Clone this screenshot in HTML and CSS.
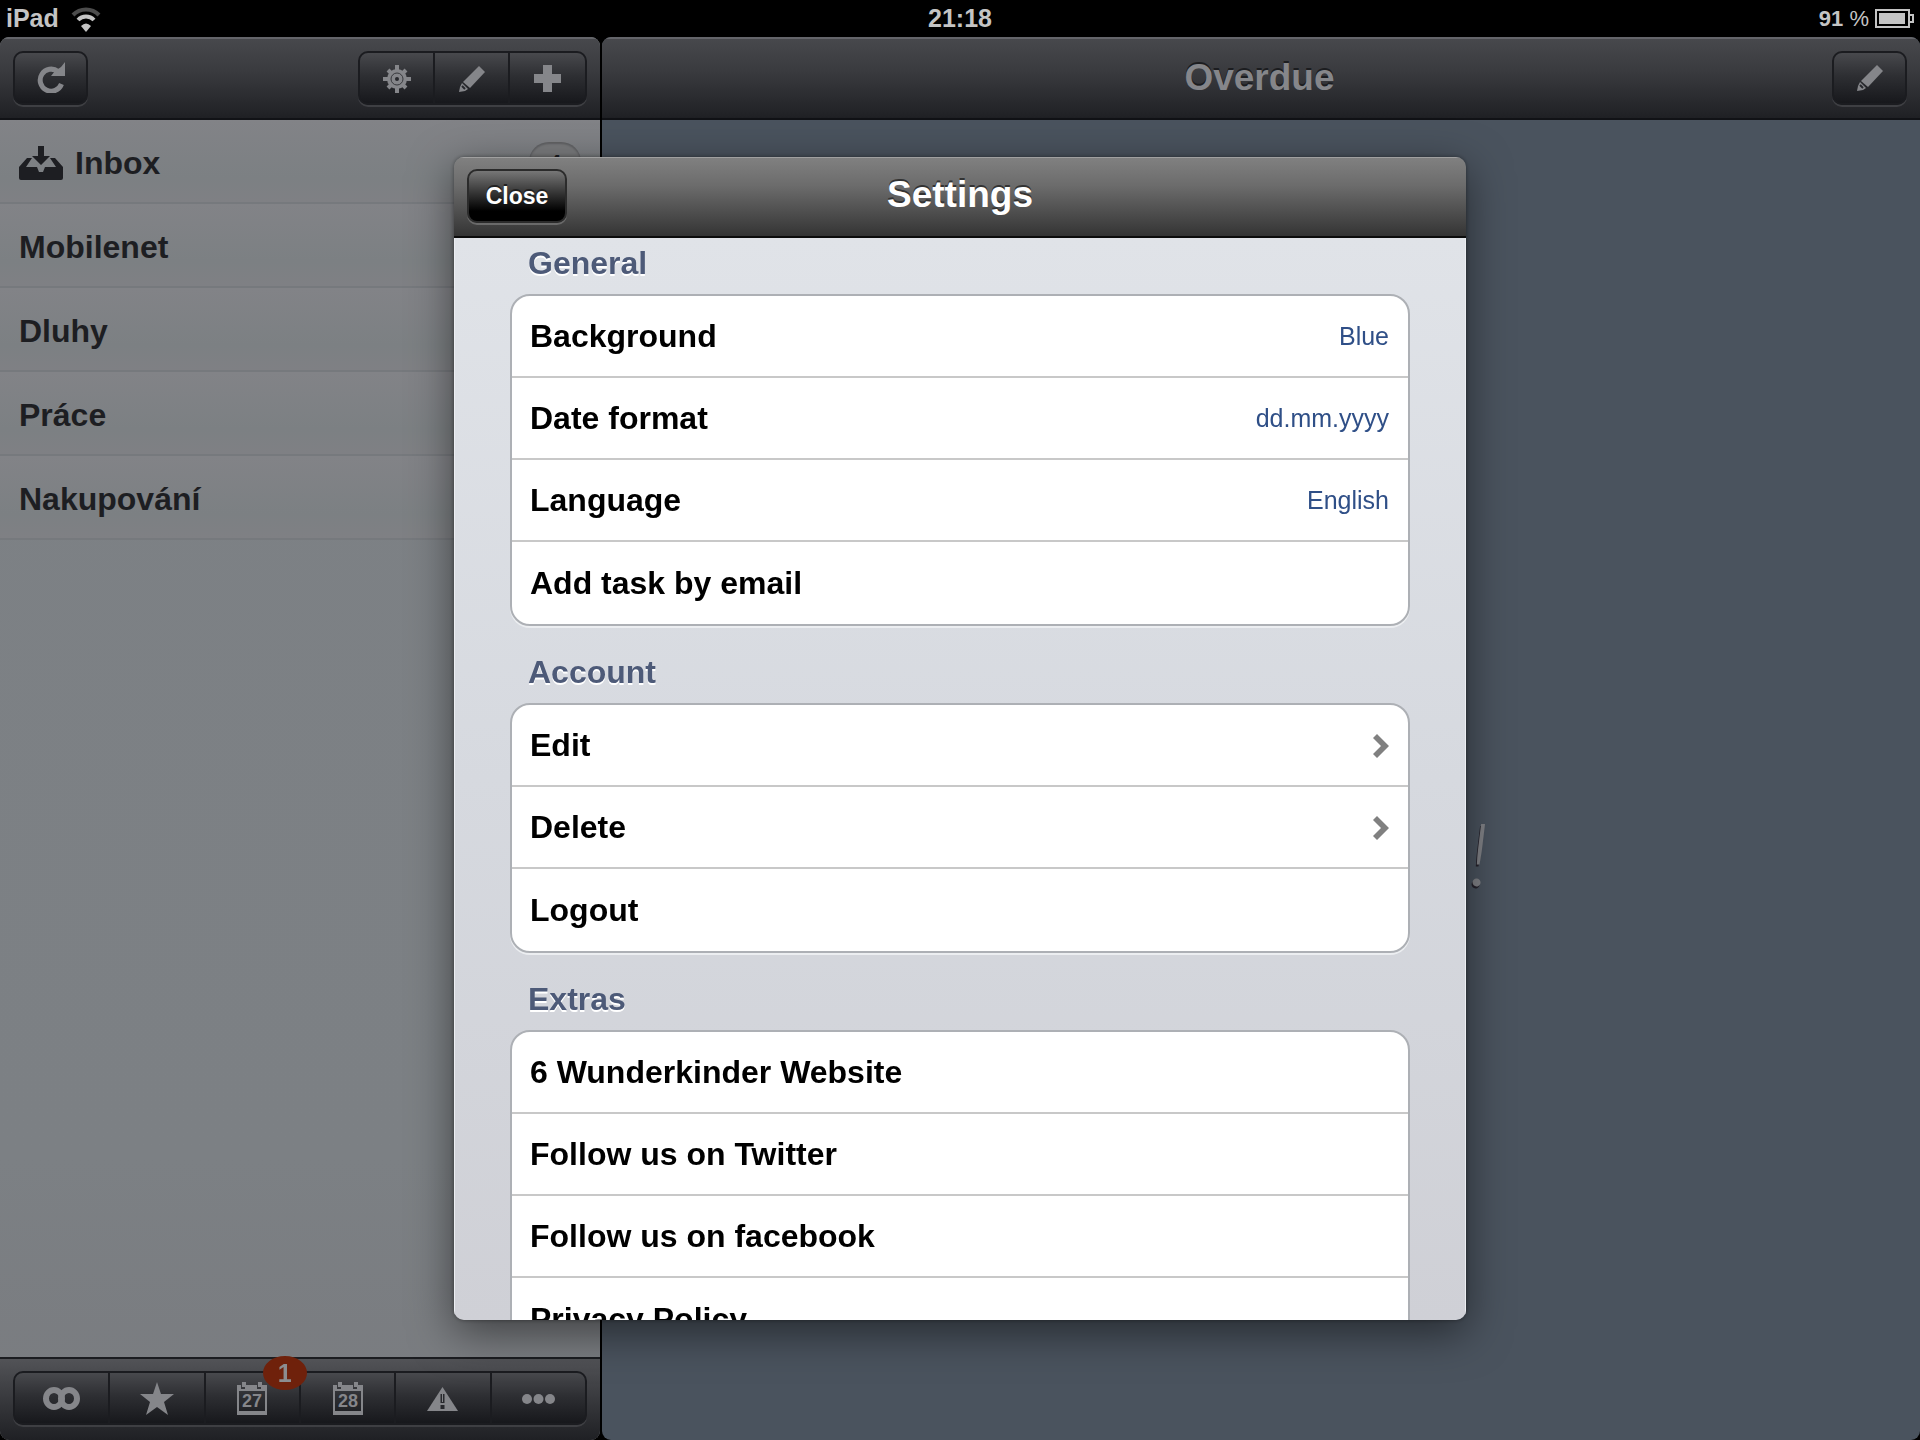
FILE: index.html
```html
<!DOCTYPE html>
<html lang="en">
<head>
  <meta charset="UTF-8" />
  <meta name="viewport" content="width=device-width, initial-scale=1.0"/>
  <title>Settings</title>
  <link rel="stylesheet" href="styles.css">
</head>
<body>
  <svg class="defs" aria-hidden="true">
    <symbol id="icon-pencil" viewBox="0 0 26 26">
      <path d="M20 0l6 6-15 16-7-6z"/>
      <path d="M3 17l6 6-3 2-6 1 1-5z"/>
      <path class="cut" d="M3 20l3 3"/>
    </symbol>
    <symbol id="icon-chevron" viewBox="0 0 16 24">
      <path d="M4 0l12 12L4 24l-4-4 8-8-8-8z"/>
    </symbol>
    <symbol id="icon-calendar" viewBox="0 0 30 33">
      <path fill-rule="evenodd" d="M0 3h4v4h4V3h12v4h4V3h6v30H0zM2 9v20h26V9z"/>
      <path d="M5 0h4v5H5zM21 0h4v5h-4z"/>
    </symbol>
  </svg>

  <div class="app">
    <div class="status-bar">
      <div class="status-left">
        <span>iPad</span>
        <svg width="30" height="26" viewBox="0 0 30 26">
          <path class="wifi-off" d="M2 9a18 18 0 0 1 26 0"/>
          <path class="wifi-on" d="M7 14a11 11 0 0 1 16 0"/>
          <path class="wifi-dot" d="M10 20q5-5 10 0l-5 6z"/>
        </svg>
      </div>
      <div class="status-time">21:18</div>
      <div class="status-right">
        <span class="percent"><b>91</b> %</span>
        <svg width="39" height="20" viewBox="0 0 39 20">
          <rect class="battery-case" x="1" y="1" width="33" height="17"/>
          <path class="battery-case" d="M34 6h4v7h-4"/>
          <rect class="battery-level" x="4" y="4" width="26" height="11"/>
        </svg>
      </div>
    </div>

    <div class="panes">
      <div class="sidebar">
        <div class="toolbar">
          <button class="bar-btn" aria-label="Refresh">
            <svg width="28" height="31" viewBox="0 0 28 31">
              <path class="stroke" d="M21 9.500A11 11 0 1 0 24.500 22"/>
              <path d="M28 0v14H14l4-5 6-4z"/>
            </svg>
          </button>
          <div class="segmented">
            <button aria-label="Settings">
              <svg width="28" height="28" viewBox="-14 -14 28 28">
                <circle r="10"/>
                <path class="teeth" d="M0-14V14M-14 0H14M-9-9L9 9M9-9L-9 9"/>
                <circle class="ring" r="6"/>
                <circle class="hole" r="2"/>
              </svg>
            </button>
            <button aria-label="Edit lists">
              <svg width="26" height="26"><use href="#icon-pencil"/></svg>
            </button>
            <button aria-label="Add list">
              <svg width="27" height="27" viewBox="0 0 27 27">
                <path d="M9 0h9v9h9v9h-9v9H9v-9H0V9h9z"/>
              </svg>
            </button>
          </div>
        </div>

        <ul class="lists">
          <li>
            <a href="#inbox">
              <svg width="44" height="34" viewBox="0 0 44 34">
                <path d="M0 21l8-9h5l-6 9h11l2 5h4l2-5h11l-6-9h5l8 9v11q0 2-2 2H2q-2 0-2-2z"/>
                <path d="M19 0h6v10h6l-9 9-9-9h6z"/>
              </svg>
              Inbox
              <span class="count">4</span>
            </a>
          </li>
          <li><a href="#mobilenet">Mobilenet</a></li>
          <li><a href="#dluhy">Dluhy</a></li>
          <li><a href="#prace">Práce</a></li>
          <li><a href="#nakupovani">Nakupování</a></li>
        </ul>

        <div class="toolbar bottom">
          <div class="segmented wide">
            <button aria-label="All">
              <svg width="37" height="23" viewBox="0 0 37 23">
                <ellipse class="loop" cx="11" cy="11.500" rx="8" ry="8.500"/>
                <ellipse class="loop" cx="26" cy="11.500" rx="8" ry="8.500"/>
              </svg>
            </button>
            <button aria-label="Starred">
              <svg width="34" height="33" viewBox="0 0 34 33">
                <path d="M17 0l4 12h13l-10 8 4 13-11-8-11 8 4-13L0 12h13z"/>
              </svg>
            </button>
            <button aria-label="Today">
              <svg width="30" height="33" viewBox="0 0 30 33">
                <use href="#icon-calendar"/>
                <text x="15" y="25">27</text>
              </svg>
              <span class="badge">1</span>
            </button>
            <button aria-label="Tomorrow">
              <svg width="30" height="33" viewBox="0 0 30 33">
                <use href="#icon-calendar"/>
                <text x="15" y="25">28</text>
              </svg>
            </button>
            <button aria-label="Overdue">
              <svg width="31" height="24" viewBox="0 0 31 24">
                <path d="M15.500 0L31 24H0z"/>
                <path class="mark" d="M15.500 7v9M15.500 18v4"/>
                <path d="M15 7h1v8h-1z"/>
              </svg>
            </button>
            <button aria-label="More">
              <svg width="33" height="10" viewBox="0 0 33 10">
                <circle cx="5" cy="5" r="5"/>
                <circle cx="16.500" cy="5" r="5"/>
                <circle cx="28" cy="5" r="5"/>
              </svg>
            </button>
          </div>
        </div>
      </div>

      <div class="detail">
        <div class="toolbar">
          <h1>Overdue</h1>
          <button class="bar-btn" aria-label="Edit tasks">
            <svg width="26" height="26"><use href="#icon-pencil"/></svg>
          </button>
        </div>
        <div class="empty-note">!</div>
      </div>
    </div>
  </div>

  <div class="overlay">
    <div class="modal" role="dialog" aria-labelledby="modal-title">
      <div class="modal-header">
        <button class="close-btn">Close</button>
        <h2 id="modal-title">Settings</h2>
      </div>
      <div class="modal-body">
        <h3>General</h3>
        <div class="group">
          <button class="item">Background <span class="value">Blue</span></button>
          <button class="item">Date format <span class="value">dd.mm.yyyy</span></button>
          <button class="item">Language <span class="value">English</span></button>
          <button class="item">Add task by email</button>
        </div>

        <h3>Account</h3>
        <div class="group">
          <button class="item">Edit <svg width="16" height="24"><use href="#icon-chevron"/></svg></button>
          <button class="item">Delete <svg width="16" height="24"><use href="#icon-chevron"/></svg></button>
          <button class="item">Logout</button>
        </div>

        <h3>Extras</h3>
        <div class="group">
          <a class="item" href="#website">6 Wunderkinder Website</a>
          <a class="item" href="#twitter">Follow us on Twitter</a>
          <a class="item" href="#facebook">Follow us on facebook</a>
          <a class="item" href="#privacy">Privacy Policy</a>
        </div>
      </div>
    </div>
  </div>
</body>
</html>
```
FILE: styles.css
```css
* {
  box-sizing: border-box;
}

body {
  margin: 0;
  font-family: "Liberation Sans", Arial, sans-serif;
  font-size: 32px;
  background-color: #000;
  overflow: hidden;
}

h1, h2, h3, ul {
  margin: 0;
  padding: 0;
}

button {
  font-family: inherit;
  cursor: pointer;
}

a {
  color: inherit;
  text-decoration: none;
}

svg {
  display: block;
  flex: none;
}

.defs {
  position: absolute;
  width: 0;
  height: 0;
}

.app {
  display: flex;
  flex-direction: column;
  height: 100vh;
}

/* status bar */
.status-bar {
  display: grid;
  grid-template-columns: 1fr auto 1fr;
  align-items: center;
  height: 37px;
  padding: 0 6px;
  color: #c4c4c4;
  font-size: 25px;
  font-weight: bold;
}

.status-left,
.status-right {
  display: flex;
  align-items: center;
  gap: 12px;
}

.status-right {
  justify-content: flex-end;
  gap: 6px;
}

.percent {
  font-size: 22px;
  font-weight: normal;
}

.wifi-on,
.wifi-off {
  fill: none;
  stroke: #c4c4c4;
  stroke-width: 4;
}

.wifi-off {
  stroke: #4c4c4c;
}

.wifi-dot,
.battery-level {
  fill: #c4c4c4;
}

.battery-case {
  fill: none;
  stroke: #c4c4c4;
  stroke-width: 2;
}

/* two panes */
.panes {
  display: flex;
  flex: 1;
  gap: 2px;
  min-height: 0;
}

.sidebar,
.detail {
  display: flex;
  flex-direction: column;
  border-radius: 9px;
  overflow: hidden;
}

.sidebar {
  width: 600px;
  background: linear-gradient(#7d8185, #7c8084 80%, #797b7f);
}

.detail {
  flex: 1;
  background-color: #4a535e;
}

.toolbar {
  display: flex;
  justify-content: space-between;
  align-items: center;
  height: 83px;
  padding: 0 13px 2px;
  background: linear-gradient(#47484c, #3a3b3f 40%, #1f2024);
  border-top: 2px solid #64656a;
  border-bottom: 2px solid #111216;
}

.toolbar.bottom {
  padding-bottom: 4px;
  background: linear-gradient(#525357, #38393d 50%, #1f2024);
  border-top-color: #1b1c20;
  border-bottom: none;
}

.toolbar h1 {
  flex: 1;
  padding-left: 72px;
  text-align: center;
  font-size: 37px;
  line-height: 44px;
  color: #85868a;
  text-shadow: 0 -2px 0 #1c1d20;
}

.bar-btn,
.segmented {
  display: flex;
  height: 54px;
  border: 2px solid #1b1c20;
  border-radius: 10px;
  background: linear-gradient(#48494d, #2e2f33 45%, #17181c);
  box-shadow: 0 2px 0 #3e3f43;
}

.bar-btn {
  width: 75px;
  padding: 0;
  justify-content: center;
  align-items: center;
}

.segmented button {
  display: flex;
  justify-content: center;
  align-items: center;
  position: relative;
  width: 75px;
  padding: 2px 0 0;
  border: none;
  border-right: 2px solid #1b1c20;
  background: none;
}

.segmented button:last-child {
  border-right: none;
}

.segmented.wide {
  flex: 1;
}

.segmented.wide button {
  flex: 1;
}

.toolbar svg {
  fill: #85868a;
}

.toolbar .stroke,
.toolbar .loop,
.toolbar .teeth {
  fill: none;
  stroke: #85868a;
  stroke-width: 5;
}

.toolbar .teeth {
  stroke-width: 4;
}

.toolbar .loop {
  stroke-width: 6;
}

.cut {
  stroke: #28292d;
  stroke-width: 2;
}

.toolbar .ring {
  fill: none;
  stroke: #38393d;
  stroke-width: 1;
}

.hole {
  fill: #28292d;
}

.mark {
  stroke: #28292d;
  stroke-width: 4;
}

.toolbar text {
  font-size: 18px;
  font-weight: bold;
  text-anchor: middle;
}

.badge {
  position: absolute;
  top: -17px;
  left: 57px;
  width: 44px;
  border-radius: 50%;
  background-color: #6f210b;
  color: #8c8d90;
  font-size: 25px;
  font-weight: bold;
  line-height: 34px;
  z-index: 1;
}

/* sidebar lists */
.lists {
  flex: 1;
  list-style: none;
}

.lists a {
  display: flex;
  align-items: center;
  gap: 12px;
  height: 84px;
  padding: 4px 19px 0;
  border-bottom: 2px solid #76797d;
  background: linear-gradient(#828387, #7c8083 70%, #7f8084);
  color: #1d1e22;
  font-weight: bold;
}

.lists svg {
  fill: #1d1e22;
}

.count {
  width: 52px;
  margin-left: auto;
  border-radius: 20px;
  background-color: #7b7c7e;
  box-shadow: inset 0 2px 2px #606164;
  font-size: 22px;
  line-height: 42px;
  text-align: center;
}

.empty-note {
  display: flex;
  flex: 1;
  justify-content: center;
  align-items: center;
  padding: 144px 0 0 436px;
  font-family: Lato, sans-serif;
  font-size: 86px;
  font-style: italic;
  font-weight: 300;
  color: #818286;
  text-shadow: -1px 2px 0 #25222b;
}

/* settings dialog */
.overlay {
  position: fixed;
  inset: 0;
  display: flex;
  justify-content: center;
  padding: 157px 20px 120px;
}

.modal {
  display: flex;
  flex-direction: column;
  width: 100%;
  max-width: 1012px;
  border-radius: 10px;
  overflow: hidden;
  box-shadow: 0 12px 44px rgba(0, 0, 0, 0.5), 0 0 4px rgba(0, 0, 0, 0.4);
}

.modal-header {
  display: grid;
  grid-template-columns: 1fr auto 1fr;
  align-items: center;
  height: 81px;
  padding: 0 13px 2px;
  background: linear-gradient(#808080, #6c6c6c 35%, #343434);
  border-top: 1px solid #a0a0a0;
  border-bottom: 2px solid #0c0c0c;
}

.modal-header h2 {
  padding-bottom: 2px;
  color: #fff;
  font-size: 37px;
  line-height: 44px;
  text-shadow: 0 -2px 0 #333;
}

.close-btn {
  justify-self: start;
  width: 100px;
  height: 54px;
  padding: 0;
  border: 2px solid #2b2b2b;
  border-radius: 10px;
  background: linear-gradient(#777, #333 45%, #000 80%);
  box-shadow: 0 2px 0 #6a6a6a;
  color: #fff;
  font-size: 23px;
  font-weight: bold;
  text-shadow: 0 -2px 0 #222;
}

.modal-body {
  flex: 1;
  min-height: 0;
  overflow: hidden;
  padding: 5px 56px 0;
  background: linear-gradient(#e0e3e8, #d6d9df 50%, #cfd0d6);
  box-shadow: inset 1px 0 0 #eceef2, inset -1px 0 0 #eceef2;
}

.modal-body h3 {
  padding: 0 18px 11px;
  color: #4d5a78;
  font-size: 32px;
  line-height: 40px;
  text-shadow: 0 2px 0 #fff;
}

.group {
  margin-bottom: 26px;
  border: 2px solid #adb0b5;
  border-radius: 20px;
  background-color: #fff;
  box-shadow: 0 2px 0 #eceef1;
}

.item {
  display: flex;
  justify-content: space-between;
  align-items: center;
  width: 100%;
  height: 82px;
  padding: 1px 19px 0 18px;
  border: none;
  border-bottom: 2px solid #c8c8c8;
  background: none;
  color: #000;
  font-size: 32px;
  font-weight: bold;
}

.item:last-child {
  border-bottom: none;
}

.item svg {
  fill: #808080;
}

.value {
  color: #2f4f87;
  font-size: 25px;
  font-weight: normal;
}
```
